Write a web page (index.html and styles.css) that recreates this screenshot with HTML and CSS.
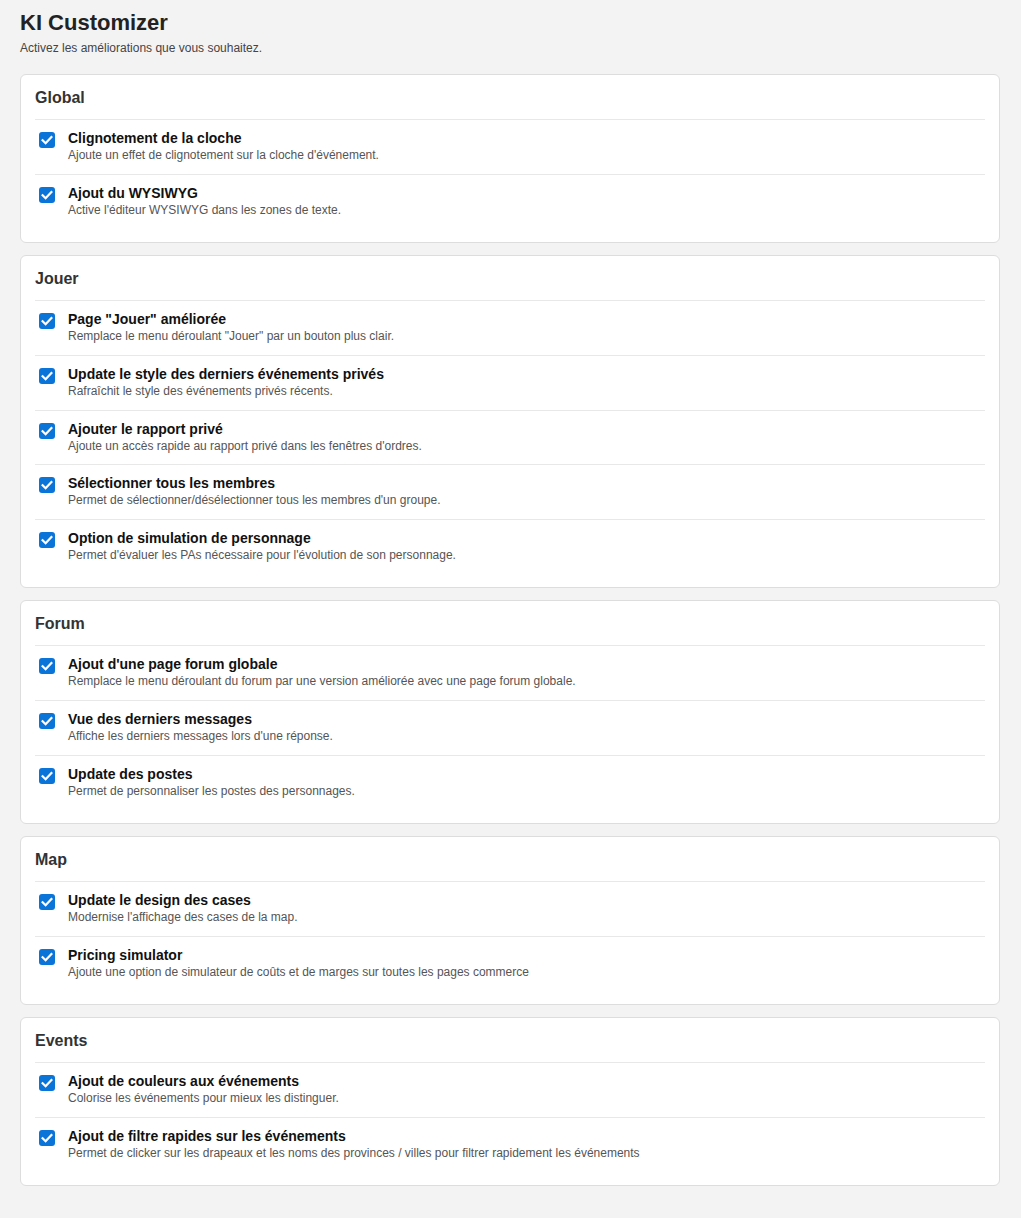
FILE: index.html
```html
<!DOCTYPE html>
<html lang="fr">
<head>
    <meta charset="UTF-8">
    <meta name="viewport" content="width=device-width, initial-scale=1.0">
    <title>KI Customizer</title>
    <link rel="stylesheet" href="styles.css">
</head>
<body>

    <h1>KI Customizer</h1>
    <p class="intro">Activez les améliorations que vous souhaitez.</p>

    <!-- Global -->
    <div class="card">
        <h2>Global</h2>
        <label class="option">
            <span class="check"><svg viewBox="0 0 16 16"><path d="M3.6 8.2l3 3 5.8-6.2"/></svg></span>
            <span class="text"><b>Clignotement de la cloche</b><small>Ajoute un effet de clignotement sur la cloche d'événement.</small></span>
        </label>
        <label class="option">
            <span class="check"><svg viewBox="0 0 16 16"><path d="M3.6 8.2l3 3 5.8-6.2"/></svg></span>
            <span class="text"><b>Ajout du WYSIWYG</b><small>Active l'éditeur WYSIWYG dans les zones de texte.</small></span>
        </label>
    </div>

    <!-- Jouer -->
    <div class="card">
        <h2>Jouer</h2>
        <label class="option">
            <span class="check"><svg viewBox="0 0 16 16"><path d="M3.6 8.2l3 3 5.8-6.2"/></svg></span>
            <span class="text"><b>Page "Jouer" améliorée</b><small>Remplace le menu déroulant "Jouer" par un bouton plus clair.</small></span>
        </label>
        <label class="option">
            <span class="check"><svg viewBox="0 0 16 16"><path d="M3.6 8.2l3 3 5.8-6.2"/></svg></span>
            <span class="text"><b>Update le style des derniers événements privés</b><small>Rafraîchit le style des événements privés récents.</small></span>
        </label>
        <label class="option">
            <span class="check"><svg viewBox="0 0 16 16"><path d="M3.6 8.2l3 3 5.8-6.2"/></svg></span>
            <span class="text"><b>Ajouter le rapport privé</b><small>Ajoute un accès rapide au rapport privé dans les fenêtres d'ordres.</small></span>
        </label>
        <label class="option">
            <span class="check"><svg viewBox="0 0 16 16"><path d="M3.6 8.2l3 3 5.8-6.2"/></svg></span>
            <span class="text"><b>Sélectionner tous les membres</b><small>Permet de sélectionner/désélectionner tous les membres d'un groupe.</small></span>
        </label>
        <label class="option">
            <span class="check"><svg viewBox="0 0 16 16"><path d="M3.6 8.2l3 3 5.8-6.2"/></svg></span>
            <span class="text"><b>Option de simulation de personnage</b><small>Permet d'évaluer les PAs nécessaire pour l'évolution de son personnage.</small></span>
        </label>
    </div>

    <!-- Forum -->
    <div class="card">
        <h2>Forum</h2>
        <label class="option">
            <span class="check"><svg viewBox="0 0 16 16"><path d="M3.6 8.2l3 3 5.8-6.2"/></svg></span>
            <span class="text"><b>Ajout d'une page forum globale</b><small>Remplace le menu déroulant du forum par une version améliorée avec une page forum globale.</small></span>
        </label>
        <label class="option">
            <span class="check"><svg viewBox="0 0 16 16"><path d="M3.6 8.2l3 3 5.8-6.2"/></svg></span>
            <span class="text"><b>Vue des derniers messages</b><small>Affiche les derniers messages lors d'une réponse.</small></span>
        </label>
        <label class="option">
            <span class="check"><svg viewBox="0 0 16 16"><path d="M3.6 8.2l3 3 5.8-6.2"/></svg></span>
            <span class="text"><b>Update des postes</b><small>Permet de personnaliser les postes des personnages.</small></span>
        </label>
    </div>

    <!-- Map -->
    <div class="card">
        <h2>Map</h2>
        <label class="option">
            <span class="check"><svg viewBox="0 0 16 16"><path d="M3.6 8.2l3 3 5.8-6.2"/></svg></span>
            <span class="text"><b>Update le design des cases</b><small>Modernise l'affichage des cases de la map.</small></span>
        </label>
        <label class="option">
            <span class="check"><svg viewBox="0 0 16 16"><path d="M3.6 8.2l3 3 5.8-6.2"/></svg></span>
            <span class="text"><b>Pricing simulator</b><small>Ajoute une option de simulateur de coûts et de marges sur toutes les pages commerce</small></span>
        </label>
    </div>

    <!-- Events -->
    <div class="card">
        <h2>Events</h2>
        <label class="option">
            <span class="check"><svg viewBox="0 0 16 16"><path d="M3.6 8.2l3 3 5.8-6.2"/></svg></span>
            <span class="text"><b>Ajout de couleurs aux événements</b><small>Colorise les événements pour mieux les distinguer.</small></span>
        </label>
        <label class="option">
            <span class="check"><svg viewBox="0 0 16 16"><path d="M3.6 8.2l3 3 5.8-6.2"/></svg></span>
            <span class="text"><b>Ajout de filtre rapides sur les événements</b><small>Permet de clicker sur les drapeaux et les noms des provinces / villes pour filtrer rapidement les événements</small></span>
        </label>
    </div>

</body>
</html>
```

FILE: styles.css
```css
/* KI Customizer options page */
* { margin: 0; padding: 0; box-sizing: border-box; }
body { background: #f3f3f3; color: #222; font-family: "Liberation Sans", Arial, sans-serif; padding: 10px 21px 20px 20px; }

h1 { font-size: 22px; line-height: 25px; font-weight: bold; color: #222; margin-bottom: 6px; }
.intro { font-size: 12px; line-height: 14px; color: #444; margin-bottom: 19px; }

.card { background: #fff; border: 1px solid #ddd; border-radius: 6px; padding: 14px 14px 13.5px; margin-bottom: 12px; }
.card h2 { font-size: 16px; line-height: 18px; font-weight: bold; color: #333; margin-bottom: 12px; }

.option { display: flex; align-items: flex-start; gap: 13px; border-top: 1px solid #e8e8e8; padding: 10px 0 10.75px 4px; cursor: pointer; }
.check { flex: none; width: 16px; height: 16px; margin-top: 2px; border-radius: 3px; background: #0b74d9; display: flex; }
.check svg { width: 16px; height: 16px; fill: none; stroke: #fff; stroke-width: 2.2; stroke-linecap: square; }

.text { display: flex; flex-direction: column; }
.text b { font-size: 14px; line-height: 17px; color: #111; }
.text small { font-size: 12px; line-height: 15px; margin-top: 1px; color: #555; }
```
